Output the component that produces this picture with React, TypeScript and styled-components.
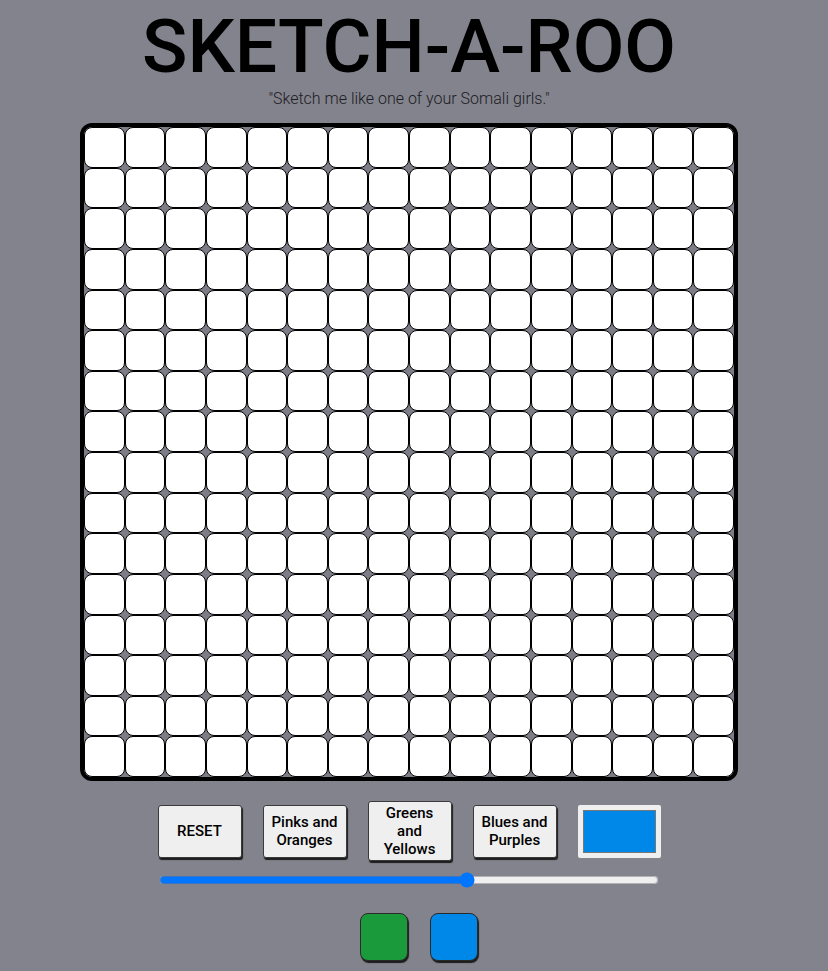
import React, { useState } from "react";
import styled, { createGlobalStyle } from "styled-components";

const GlobalStyle = createGlobalStyle`
  html, body {
    margin: 0;
    padding: 0;
    background-color: #83838d;
    font-family: Roboto, "Liberation Sans", sans-serif;
  }
`;

const Page = styled.div`
  display: flex;
  flex-direction: column;
  align-items: center;
  width: 818px;
  min-height: 971px;
`;

const Title = styled.h1`
  margin: 8px 0 0 0;
  font-size: 75px;
  line-height: 76px;
  font-weight: 500;
  color: #000;
`;

const Quote = styled.p`
  margin: 5px 0 0 0;
  font-size: 16px;
  line-height: 20px;
  font-weight: 300;
  color: #1c1c22;
`;

const Board = styled.div`
  margin-top: 14px;
  width: 650px;
  height: 650px;
  border: 4px solid #000;
  border-radius: 12px;
  overflow: hidden;
  background-color: #7d7d87;
  display: grid;
  grid-template-columns: repeat(16, 1fr);
  grid-template-rows: repeat(16, 1fr);
`;

const Cell = styled.div<{ $fill: string }>`
  background-color: ${(p) => p.$fill};
  border: 1px solid #000;
  border-radius: 8px;
`;

const Controls = styled.div`
  margin-top: 20px;
  display: flex;
  align-items: center;
  gap: 21px;
`;

const Button = styled.button`
  width: 84px;
  min-height: 53px;
  padding: 2px 6px;
  background-color: #efefef;
  border: 1px solid #3a3a3a;
  border-radius: 3px;
  box-shadow: 1px 2px 1px #1b1b1b;
  font-family: Roboto, "Liberation Sans", sans-serif;
  font-size: 15px;
  font-weight: 500;
  line-height: 18px;
  color: #000;
  cursor: pointer;
`;

const ColorBox = styled.div`
  width: 73px;
  height: 43px;
  padding: 5px;
  background-color: #efefef;
  border-radius: 2px;
  display: flex;
`;

const ColorSwatch = styled.div<{ $fill: string }>`
  flex: 1;
  background-color: ${(p) => p.$fill};
  border: 1px solid #777;
`;

const Slider = styled.input`
  margin: 11px 0 0 0;
  width: 500px;
  height: 16px;
  accent-color: #0075ff;
`;

const Swatches = styled.div`
  margin: 25px 0 0 20px;
  display: flex;
  gap: 22px;
`;

const Swatch = styled.div<{ $fill: string }>`
  width: 46px;
  height: 46px;
  background-color: ${(p) => p.$fill};
  border: 1px solid #2a2a2a;
  border-radius: 8px;
  box-shadow: 1px 2px 1px #1b1b1b;
`;

const SIZE = 16;

export default function App() {
  const [size, setSize] = useState(62);
  const cells = Array.from({ length: SIZE * SIZE });
  return (
    <>
      <GlobalStyle />
      <Page>
        <Title>SKETCH-A-ROO</Title>
        <Quote>"Sketch me like one of your Somali girls."</Quote>
        <Board>
          {cells.map((_, i) => (
            <Cell key={i} $fill="#fff" />
          ))}
        </Board>
        <Controls>
          <Button>RESET</Button>
          <Button>Pinks and Oranges</Button>
          <Button>Greens and Yellows</Button>
          <Button>Blues and Purples</Button>
          <ColorBox>
            <ColorSwatch $fill="#0088e8" />
          </ColorBox>
        </Controls>
        <Slider
          type="range"
          min={0}
          max={100}
          value={size}
          onChange={(e) => setSize(Number(e.target.value))}
        />
        <Swatches>
          <Swatch $fill="#1a9a3a" />
          <Swatch $fill="#0088e8" />
        </Swatches>
      </Page>
    </>
  );
}
